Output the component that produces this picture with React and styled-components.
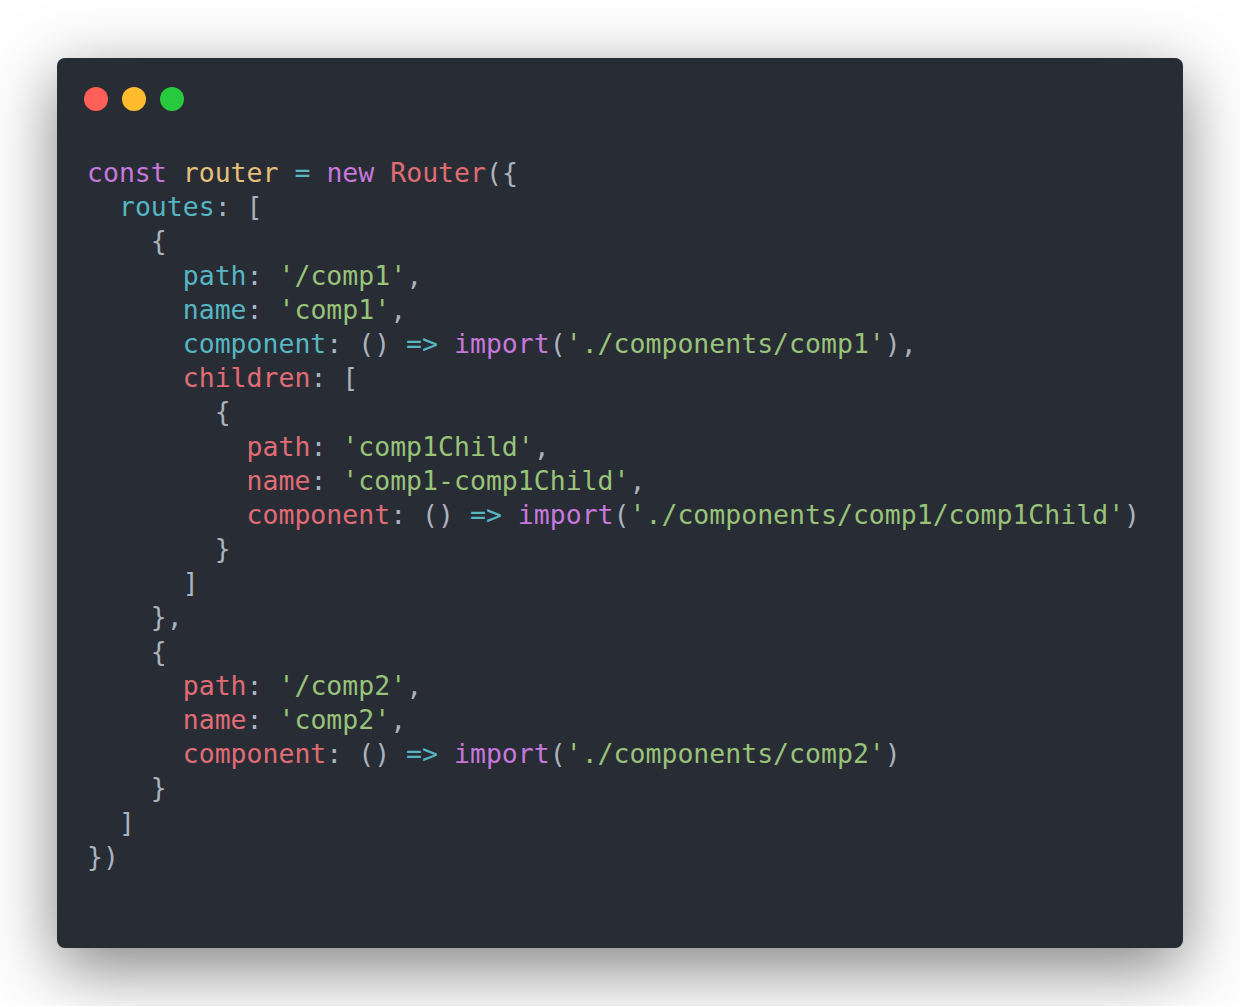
import React from "react";
import styled, { createGlobalStyle } from "styled-components";

const GlobalStyle = createGlobalStyle`
  html, body {
    margin: 0;
    padding: 0;
    background: #ffffff;
  }
`;

const palette = {
  kw: "#c678dd",
  var: "#e5c07b",
  op: "#56b6c2",
  prop: "#56b6c2",
  key: "#e06c75",
  cls: "#e06c75",
  str: "#98c379",
  txt: "#abb2bf",
};

// each line: [indent, [[kind, text], ...]]
const lines = [
  [0, [["kw", "const"], ["txt", " "], ["var", "router"], ["txt", " "], ["op", "="], ["txt", " "], ["kw", "new"], ["txt", " "], ["cls", "Router"], ["txt", "({"]]],
  [2, [["prop", "routes"], ["txt", ": ["]]],
  [4, [["txt", "{"]]],
  [6, [["prop", "path"], ["txt", ": "], ["str", "'/comp1'"], ["txt", ","]]],
  [6, [["prop", "name"], ["txt", ": "], ["str", "'comp1'"], ["txt", ","]]],
  [6, [["prop", "component"], ["txt", ": () "], ["op", "=>"], ["txt", " "], ["kw", "import"], ["txt", "("], ["str", "'./components/comp1'"], ["txt", "),"]]],
  [6, [["key", "children"], ["txt", ": ["]]],
  [8, [["txt", "{"]]],
  [10, [["key", "path"], ["txt", ": "], ["str", "'comp1Child'"], ["txt", ","]]],
  [10, [["key", "name"], ["txt", ": "], ["str", "'comp1-comp1Child'"], ["txt", ","]]],
  [10, [["key", "component"], ["txt", ": () "], ["op", "=>"], ["txt", " "], ["kw", "import"], ["txt", "("], ["str", "'./components/comp1/comp1Child'"], ["txt", ")"]]],
  [8, [["txt", "}"]]],
  [6, [["txt", "]"]]],
  [4, [["txt", "},"]]],
  [4, [["txt", "{"]]],
  [6, [["key", "path"], ["txt", ": "], ["str", "'/comp2'"], ["txt", ","]]],
  [6, [["key", "name"], ["txt", ": "], ["str", "'comp2'"], ["txt", ","]]],
  [6, [["key", "component"], ["txt", ": () "], ["op", "=>"], ["txt", " "], ["kw", "import"], ["txt", "("], ["str", "'./components/comp2'"], ["txt", ")"]]],
  [4, [["txt", "}"]]],
  [2, [["txt", "]"]]],
  [0, [["txt", "})"]]],
];

const App = () => {
  return (
    <>
      <GlobalStyle />
      <Page>
        <Window>
          <TitleBar>
            <Light $color="#ff5f56" />
            <Light $color="#ffbd2e" />
            <Light $color="#27c93f" />
          </TitleBar>
          <Code>
            {lines.map(([indent, tokens], i) => (
              <Line key={i}>
                {" ".repeat(indent)}
                {tokens.map(([kind, text], j) => (
                  <Token key={j} $kind={kind}>
                    {text}
                  </Token>
                ))}
              </Line>
            ))}
          </Code>
        </Window>
      </Page>
    </>
  );
};
export default App;

const Page = styled.div`
  padding: 58px 57px;
  width: 1240px;
  box-sizing: border-box;
`;
const Window = styled.div`
  width: 1126px;
  height: 890px;
  box-sizing: border-box;
  background: #282c34;
  border-radius: 8px;
  box-shadow: rgba(0, 0, 0, 0.5) 0px 20px 68px;
  padding: 29px 31px 0 27px;
`;
const TitleBar = styled.div`
  display: flex;
  gap: 14px;
  align-items: center;
  height: 24px;
`;
const Light = styled.span`
  width: 24px;
  height: 24px;
  border-radius: 50%;
  background: ${(p) => p.$color};
`;
const Code = styled.pre`
  margin: 45px 0 0 3px;
  font-family: "DejaVu Sans Mono", "Liberation Mono", monospace;
  font-size: 26.5px;
  line-height: 34.2px;
  color: #abb2bf;
`;
const Line = styled.div`
  white-space: pre;
  height: 34.2px;
`;
const Token = styled.span`
  color: ${(p) => palette[p.$kind]};
`;
